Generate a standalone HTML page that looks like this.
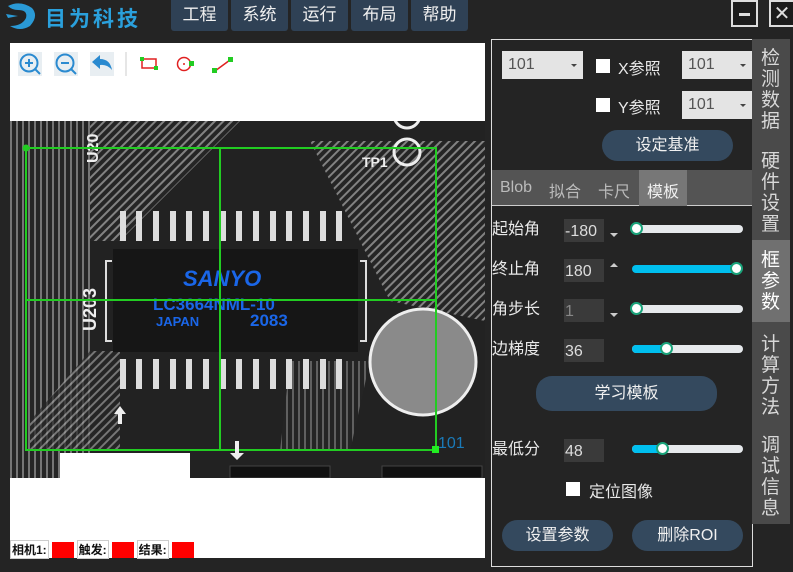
<!DOCTYPE html>
<html><head><meta charset="utf-8"><style>
*{margin:0;padding:0;box-sizing:border-box}
body{width:793px;height:572px;background:#242424;position:relative;overflow:hidden;font-family:"Liberation Sans","Noto Sans CJK SC",sans-serif;color:#e8e8e8}
.abs{position:absolute}
.menu{position:absolute;top:0;height:31px;width:57px;background:#2f4155;color:#f0f0f0;font-size:17px;text-align:center;line-height:30px;border-radius:0 0 3px 3px}
.sel{position:absolute;background:#e4e4e4;color:#555;font-size:16px;height:28px;line-height:28px;padding-left:6px}
.sel:after{content:"";position:absolute;right:6px;top:13px;border:3px solid transparent;border-top:3px solid #444}
.cb{position:absolute;width:14px;height:14px;background:#fff}
.lbl{position:absolute;font-size:16px;color:#e8e8e8}
.btn{position:absolute;background:#34495e;color:#f0f0f0;font-size:16px;text-align:center;border-radius:16px}
.num{position:absolute;width:40px;height:23px;background:#3a3a3a;color:#ddd;font-size:16px;line-height:26px;padding-left:1px}
.track{position:absolute;height:8px;background:#e6e9ec;border-radius:4px;width:111px;left:632px}
.fill{position:absolute;height:8px;background:#00bfef;border-radius:4px;left:632px}
.knob{position:absolute;width:13px;height:13px;border-radius:50%;background:#fff;border:2px solid #1aa37a}
.side{position:absolute;left:752px;width:38px;background:#4a4a4a;color:#d8d8d8;font-size:19px;line-height:21px;padding-top:9px}
.side span{display:block;width:20px;margin:0 auto;word-break:break-all}
</style></head><body>
<svg class="abs" style="left:4px;top:2px" width="34" height="28" viewBox="0 0 34 28"><path d="M4 4 Q16 -2 28 6 Q35 14 26 24 Q16 30 6 24 Q18 24 22 16 Q24 8 14 8 Q8 8 4 4Z" fill="#2a9ad6"/><path d="M2 12 L14 14 L4 16Z" fill="#2a9ad6"/></svg>
<div class="abs" style="left:45px;top:3px;font-size:21px;font-weight:bold;color:#2aa0dc;letter-spacing:3px">目为科技</div>
<div class="menu" style="left:171px">工程</div>
<div class="menu" style="left:231px">系统</div>
<div class="menu" style="left:291px">运行</div>
<div class="menu" style="left:351px">布局</div>
<div class="menu" style="left:411px">帮助</div>
<div class="abs" style="left:731px;top:0;width:27px;height:27px;border:2px solid #ddd;background:#1c1c1c"><div class="abs" style="left:6px;top:11px;width:11px;height:3px;background:#ddd"></div></div>
<div class="abs" style="left:769px;top:0;width:24px;height:27px;border:2px solid #ddd;border-right:none;background:#1c1c1c;color:#ddd;font-size:20px;text-align:center;line-height:24px">✕</div>

<div class="abs" style="left:10px;top:43px;width:475px;height:80px;background:#fff"></div>
<svg class="abs" style="left:16px;top:50px" width="225" height="28" viewBox="0 0 225 28">
<rect x="2" y="2" width="24" height="24" fill="#e8eef2"/><circle cx="13" cy="13" r="8.5" fill="none" stroke="#2a8ad0" stroke-width="2"/><path d="M9 13h8M13 9v8M19 19l5 5" stroke="#2a8ad0" stroke-width="2"/>
<rect x="38" y="2" width="24" height="24" fill="#e8eef2"/><circle cx="49" cy="13" r="8.5" fill="none" stroke="#2a8ad0" stroke-width="2"/><path d="M45 13h8M55 19l5 5" stroke="#2a8ad0" stroke-width="2"/>
<rect x="74" y="2" width="24" height="24" fill="#e8eef2"/><path d="M76 12 L84 5 L84 9 Q94 9 96 20 Q91 14 84 15 L84 19Z" fill="#2a8ad0"/>
<path d="M110 2v24" stroke="#ccc"/>
<rect x="126" y="9" width="14" height="9" fill="none" stroke="#e02020" stroke-width="1.5"/><rect x="124" y="7" width="4" height="4" fill="#2c2"/><rect x="138" y="16" width="4" height="4" fill="#2c2"/>
<circle cx="168" cy="14" r="6.5" fill="none" stroke="#e02020" stroke-width="1.5"/><circle cx="168" cy="14" r="1" fill="#e02020"/><rect x="173" y="11" width="5" height="5" fill="#2c2"/>
<path d="M199 21 L214 10" stroke="#e02020" stroke-width="1.5"/><rect x="196" y="18" width="5" height="5" fill="#2c2"/><rect x="212" y="7" width="5" height="5" fill="#2c2"/>
</svg>
<div class="abs" style="left:10px;top:478px;width:475px;height:80px;background:#fff"></div>
<svg class="abs" style="left:10px;top:121px" width="475" height="357" viewBox="0 0 475 357">
<defs><pattern id="tr" width="6" height="6" patternUnits="userSpaceOnUse" patternTransform="rotate(45)"><rect width="6" height="6" fill="#262626"/><rect width="2" height="6" fill="#9a9a9a"/></pattern>
<pattern id="tr2" width="6" height="6" patternUnits="userSpaceOnUse"><rect width="6" height="6" fill="#262626"/><rect width="2" height="6" fill="#8a8a8a"/></pattern></defs>
<rect width="475" height="357" fill="#222"/>
<rect x="0" y="0" width="80" height="357" fill="url(#tr2)" opacity=".8"/>
<polygon points="80,0 230,0 110,120 80,120" fill="url(#tr)" opacity=".8"/>
<polygon points="300,20 475,20 475,200 380,180" fill="url(#tr)" opacity=".8"/>
<polygon points="80,230 110,230 110,330 20,330 20,300" fill="url(#tr)" opacity=".7"/>
<polygon points="280,240 360,240 340,330 270,330" fill="url(#tr2)" opacity=".6"/>
<g fill="#ddd">
<rect x="110" y="90" width="6" height="30"/><rect x="126" y="90" width="6" height="30"/><rect x="143" y="90" width="6" height="30"/><rect x="160" y="90" width="6" height="30"/><rect x="176" y="90" width="6" height="30"/><rect x="193" y="90" width="6" height="30"/><rect x="210" y="90" width="6" height="30"/><rect x="226" y="90" width="6" height="30"/><rect x="243" y="90" width="6" height="30"/><rect x="260" y="90" width="6" height="30"/><rect x="276" y="90" width="6" height="30"/><rect x="293" y="90" width="6" height="30"/><rect x="310" y="90" width="6" height="30"/><rect x="326" y="90" width="6" height="30"/>
<rect x="110" y="238" width="6" height="30"/><rect x="126" y="238" width="6" height="30"/><rect x="143" y="238" width="6" height="30"/><rect x="160" y="238" width="6" height="30"/><rect x="176" y="238" width="6" height="30"/><rect x="193" y="238" width="6" height="30"/><rect x="210" y="238" width="6" height="30"/><rect x="226" y="238" width="6" height="30"/><rect x="243" y="238" width="6" height="30"/><rect x="260" y="238" width="6" height="30"/><rect x="276" y="238" width="6" height="30"/><rect x="293" y="238" width="6" height="30"/><rect x="310" y="238" width="6" height="30"/><rect x="326" y="238" width="6" height="30"/>
</g>
<rect x="103" y="128" width="245" height="103" fill="#161616"/>
<path d="M102 140 h-6 v80 h6 M350 140 h6 v80 h-6" stroke="#ddd" stroke-width="2" fill="none"/>
<circle cx="413" cy="241" r="53" fill="#8a8a8a" stroke="#eee" stroke-width="3"/>
<circle cx="397" cy="31" r="13" fill="none" stroke="#eee" stroke-width="3"/><circle cx="397" cy="-6" r="13" fill="none" stroke="#eee" stroke-width="3"/>
<text x="352" y="46" fill="#eee" font-size="14" font-weight="bold">TP1</text>
<text x="0" y="0" fill="#eee" font-size="16" font-weight="bold" transform="translate(88,42) rotate(-90)">U20</text>
<text x="0" y="0" fill="#eee" font-size="18" font-weight="bold" transform="translate(86,210) rotate(-90)">U203</text>
<rect x="50" y="332" width="130" height="25" fill="#fff"/>
<rect x="220" y="345" width="100" height="12" fill="#111" stroke="#444"/><rect x="372" y="345" width="100" height="12" fill="#111" stroke="#444"/>
<g fill="#1a66e8" font-weight="bold" font-family="Liberation Sans,sans-serif"><text x="173" y="165" font-size="22" font-style="italic">SANYO</text><text x="143" y="189" font-size="17">LC3664NML-10</text><text x="146" y="205" font-size="13">JAPAN</text><text x="240" y="205" font-size="17">2083</text></g>
<g stroke="#22cc22" stroke-width="2" fill="none"><rect x="16" y="27" width="410" height="302"/><path d="M210 27v302M16 179h410"/></g>
<circle cx="16" cy="27" r="3.5" fill="#22cc22"/><rect x="422" y="325" width="7" height="7" fill="#22ee22"/>
<text x="428" y="327" fill="#1a7ab8" font-size="16">101</text>
<path d="M110 285 l-6 8 h4 v10 h4 v-10 h4z M225 320 v12 h-5 l7 7 l7 -7 h-5 v-12z" fill="#eee"/>
</svg>
<div class="abs" style="left:10px;top:540px;font-size:12px;color:#111;font-weight:bold;display:flex;gap:3px;align-items:center">
<span style="border:1px solid #ccc;padding:0 1px">相机1:</span><span style="width:22px;height:16px;background:#f00;display:inline-block"></span>
<span style="border:1px solid #ccc;padding:0 1px">触发:</span><span style="width:22px;height:16px;background:#f00;display:inline-block"></span>
<span style="border:1px solid #ccc;padding:0 1px">结果:</span><span style="width:22px;height:16px;background:#f00;display:inline-block"></span></div>

<div class="abs" style="left:491px;top:39px;width:262px;height:528px;border:1px solid #ddd"></div>
<div class="sel" style="left:502px;top:51px;width:81px">101</div>
<div class="cb" style="left:596px;top:59px"></div><div class="lbl" style="left:618px;top:55px">X参照</div>
<div class="sel" style="left:682px;top:51px;width:70px">101</div>
<div class="cb" style="left:596px;top:98px"></div><div class="lbl" style="left:618px;top:94px">Y参照</div>
<div class="sel" style="left:682px;top:91px;width:70px">101</div>
<div class="btn" style="left:602px;top:130px;width:131px;height:31px;line-height:31px">设定基准</div>
<div class="abs" style="left:492px;top:170px;width:260px;height:36px;background:#545454;border-bottom:1px solid #ccc"></div>
<div class="abs" style="left:639px;top:170px;width:48px;height:36px;background:#777"></div>
<div class="lbl" style="left:500px;top:179px;color:#bbb">Blob</div><div class="lbl" style="left:549px;top:178px;color:#bbb">拟合</div><div class="lbl" style="left:598px;top:178px;color:#bbb">卡尺</div><div class="lbl" style="left:647px;top:178px;color:#f0f0f0">模板</div>

<div class="lbl" style="left:492px;top:215px">起始角</div><div class="num" style="left:564px;top:219px">-180</div>
<div class="lbl" style="left:492px;top:255px">终止角</div><div class="num" style="left:564px;top:259px">180</div>
<div class="lbl" style="left:492px;top:295px">角步长</div><div class="num" style="left:564px;top:299px;color:#888">1</div>
<div class="lbl" style="left:492px;top:335px">边梯度</div><div class="num" style="left:564px;top:339px">36</div>
<div class="lbl" style="left:492px;top:435px">最低分</div><div class="num" style="left:564px;top:439px">48</div>
<div class="abs" style="left:610px;top:233px;border:4px solid transparent;border-top:4px solid #ccc"></div>
<div class="abs" style="left:610px;top:259px;border:4px solid transparent;border-bottom:4px solid #ccc"></div>
<div class="abs" style="left:610px;top:313px;border:4px solid transparent;border-top:4px solid #ccc"></div>
<div class="track" style="top:225px"></div><div class="knob" style="left:630px;top:222px"></div>
<div class="fill" style="top:265px;width:108px"></div><div class="knob" style="left:730px;top:262px"></div>
<div class="track" style="top:305px"></div><div class="knob" style="left:630px;top:302px"></div>
<div class="track" style="top:345px"></div><div class="fill" style="top:345px;width:32px"></div><div class="knob" style="left:660px;top:342px"></div>
<div class="btn" style="left:536px;top:376px;width:181px;height:35px;line-height:35px">学习模板</div>
<div class="track" style="top:445px"></div><div class="fill" style="top:445px;width:30px"></div><div class="knob" style="left:656px;top:442px"></div>
<div class="cb" style="left:566px;top:482px"></div><div class="lbl" style="left:589px;top:478px">定位图像</div>
<div class="btn" style="left:502px;top:520px;width:111px;height:31px;line-height:31px">设置参数</div>
<div class="btn" style="left:632px;top:520px;width:111px;height:31px;line-height:31px">删除ROI</div>

<div class="side" style="top:39px;height:100px"><span>检测数据</span></div>
<div class="side" style="top:139px;height:101px;padding-top:12px"><span>硬件设置</span></div>
<div class="side" style="top:240px;height:82px;background:#707070;color:#fff;padding-top:10px"><span>框参数</span></div>
<div class="side" style="top:322px;height:102px;padding-top:12px"><span>计算方法</span></div>
<div class="side" style="top:424px;height:100px;padding-top:11px"><span>调试信息</span></div>
</body></html>
